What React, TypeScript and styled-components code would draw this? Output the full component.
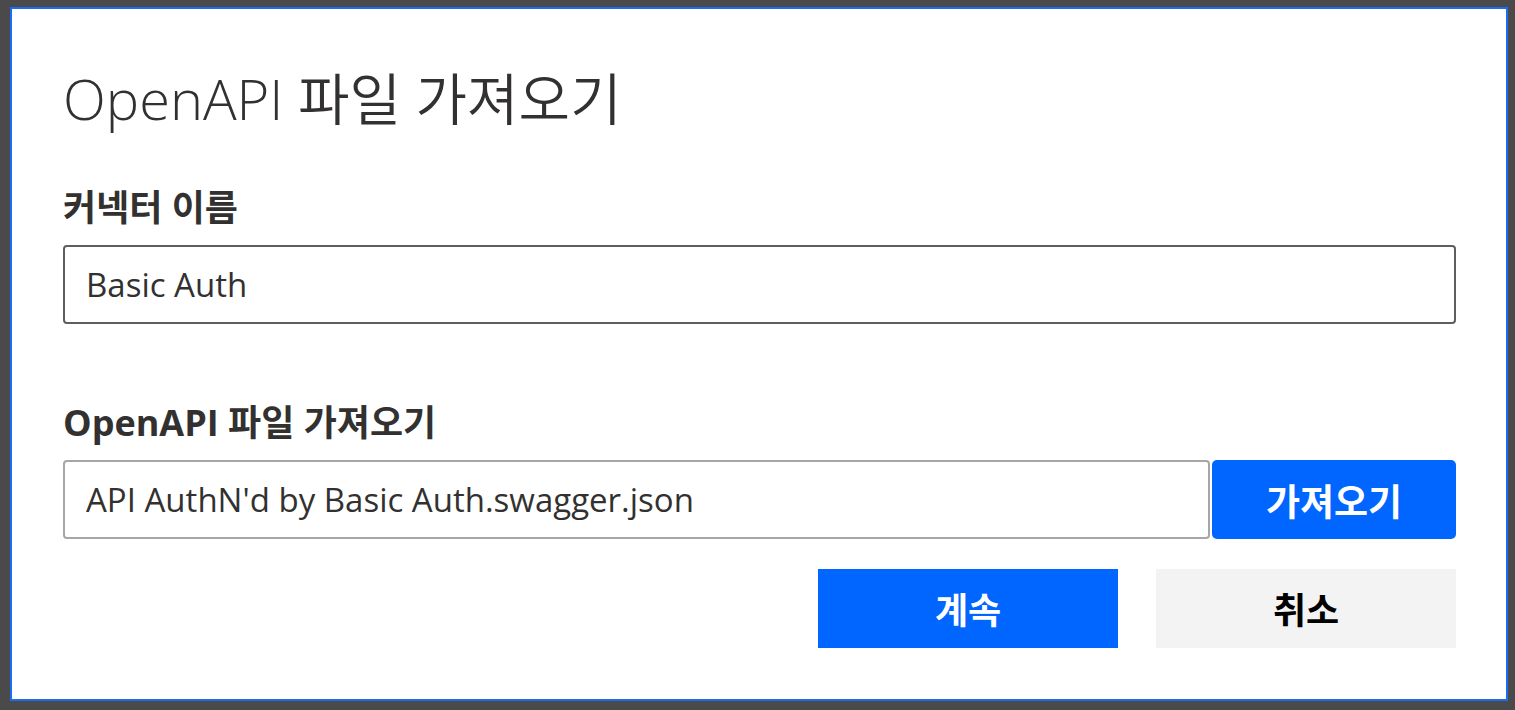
import { FC } from "react"
import styled, { createGlobalStyle } from "styled-components"

const GlobalStyle = createGlobalStyle`
	html, body {
		margin: 0;
		padding: 0;
		background: #4a4a4a;
	}

	body {
		font-family: "Open Sans", "Noto Sans CJK KR", sans-serif;
	}
`

const App: FC = () => {
	return (
		<>
			<GlobalStyle />
			<Page>
				<Dialog>
					<Title>OpenAPI 파일 가져오기</Title>

					<Field $gap={56}>
						<Label>커넥터 이름</Label>
						<TextInput type="text" defaultValue="Basic Auth" $tone="dark" />
					</Field>

					<Field $gap={79}>
						<Label>OpenAPI 파일 가져오기</Label>
						<FileRow>
							<TextInput type="text" defaultValue="API AuthN'd by Basic Auth.swagger.json" $tone="light" $grow />
							<ImportButton>가져오기</ImportButton>
						</FileRow>
					</Field>

					<Actions>
						<ActionButton $primary>계속</ActionButton>
						<ActionButton>취소</ActionButton>
					</Actions>
				</Dialog>
			</Page>
		</>
	)
}

const Page = styled.div`
	/* Layout */
	width: 1515px;
	height: 710px;
	padding: 7px 7px 9px 10px;
	box-sizing: border-box;
`

const Dialog = styled.div`
	/* Layout */
	display: flex;
	flex-direction: column;
	height: 100%;
	box-sizing: border-box;
	padding: 55px 50px 0px 51px;

	/* Color */
	background: #ffffff;

	/* Border */
	border: 2px solid #1a6cf5;
`

const Title = styled.h1`
	margin: 0;
	font-size: 56px;
	font-weight: 350;
	line-height: 68px;
	color: #323130;
`

const Field = styled.div<{ $gap: number }>`
	/* Layout */
	display: flex;
	flex-direction: column;
	gap: 17px;
	margin-top: ${p => p.$gap}px;
`

const Label = styled.label`
	font-size: 36px;
	font-weight: 700;
	line-height: 40px;
	color: #323130;
`

const FileRow = styled.div`
	/* Layout */
	display: flex;
	gap: 2px;
	align-items: stretch;
`

const TextInput = styled.input<{ $tone: "dark" | "light"; $grow?: boolean }>`
	/* Layout */
	flex: ${p => (p.$grow ? "1 1 auto" : "none")};
	min-width: 0;
	height: 79px;
	box-sizing: border-box;
	padding: 0 21px;

	/* Text */
	font-family: "Open Sans", "Noto Sans CJK KR", sans-serif;
	font-size: 33px;
	color: #323130;

	/* Border */
	border: 2px solid ${p => (p.$tone === "dark" ? "#605e5c" : "#a6a6a6")};
	border-radius: 4px;
	outline: none;
	background: #ffffff;
`

const ImportButton = styled.button`
	/* Layout */
	flex: none;
	width: 244px;
	height: 79px;

	/* Color */
	background: #0066ff;
	color: #ffffff;

	/* Text */
	font-family: "Open Sans", "Noto Sans CJK KR", sans-serif;
	font-size: 37px;
	font-weight: 700;

	/* Border */
	border: none;
	border-radius: 5px;
	cursor: pointer;
`

const Actions = styled.div`
	/* Layout */
	display: flex;
	justify-content: flex-end;
	gap: 38px;
	margin-top: 30px;
`

const ActionButton = styled.button<{ $primary?: boolean }>`
	/* Layout */
	width: 300px;
	height: 79px;

	/* Color */
	background: ${p => (p.$primary ? "#0066ff" : "#f3f3f3")};
	color: ${p => (p.$primary ? "#ffffff" : "#000000")};

	/* Text */
	font-family: "Open Sans", "Noto Sans CJK KR", sans-serif;
	font-size: 36px;
	font-weight: 700;

	/* Border */
	border: none;
	border-radius: 0;
	cursor: pointer;
`

export default App
